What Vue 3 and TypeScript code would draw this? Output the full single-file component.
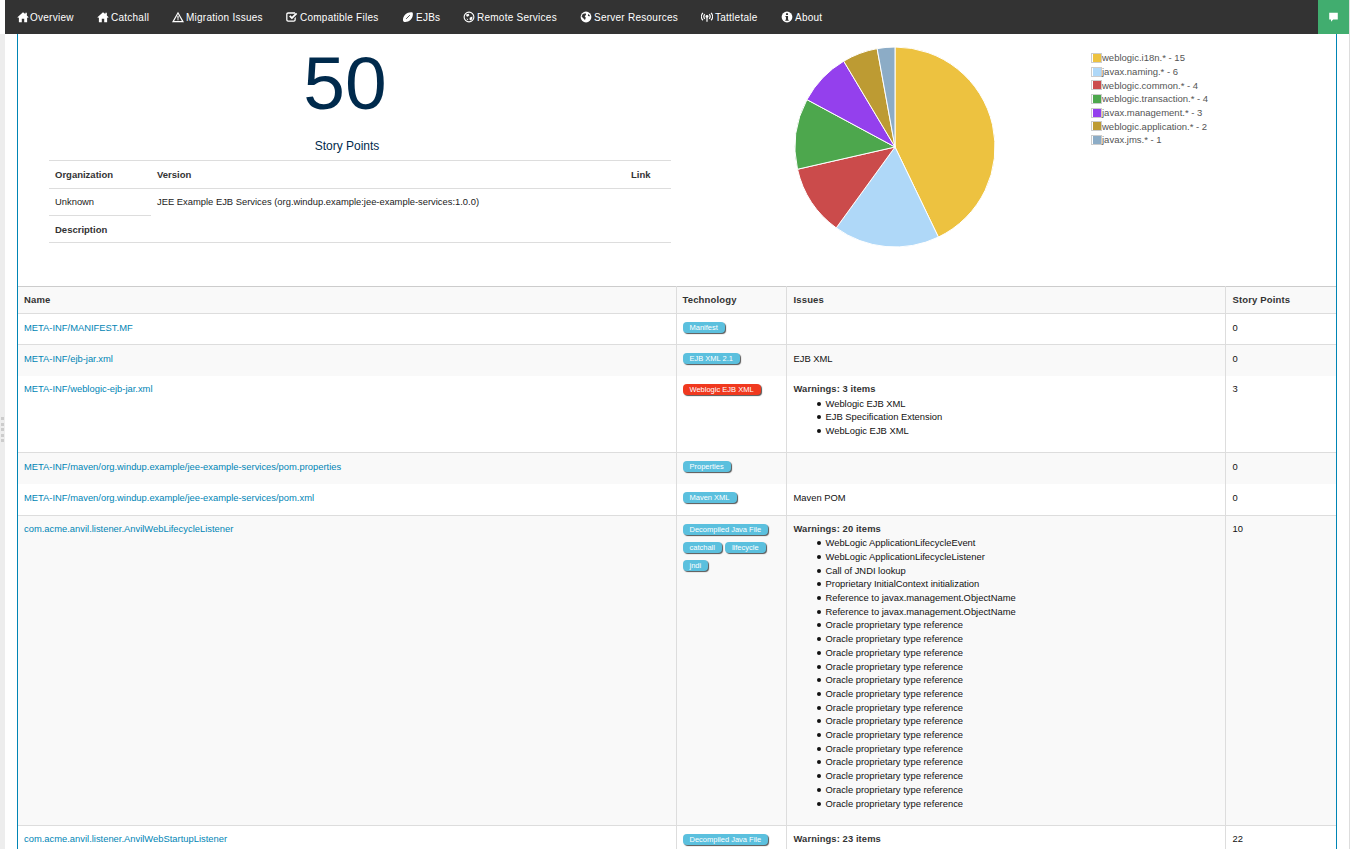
<script setup lang="ts">
interface Tag { text: string; red?: boolean }
interface Row { name: string; tags: Tag[]; plain?: string; title?: string; items?: string[]; points: number; h: number; line?: boolean; up?: boolean; wide?: boolean }

const oracle = Array.from({ length: 14 }, () => 'Oracle proprietary type reference')
const rows: Row[] = [
  { name: 'META-INF/MANIFEST.MF', tags: [{ text: 'Manifest' }], points: 0, h: 31 },
  { name: 'META-INF/ejb-jar.xml', tags: [{ text: 'EJB XML 2.1' }], plain: 'EJB XML', points: 0, h: 31, line: true },
  { name: 'META-INF/weblogic-ejb-jar.xml', tags: [{ text: 'Weblogic EJB XML', red: true }], title: 'Warnings: 3 items', items: ['Weblogic EJB XML', 'EJB Specification Extension', 'WebLogic EJB XML'], points: 3, h: 77, up: true, wide: true },
  { name: 'META-INF/maven/org.windup.example/jee-example-services/pom.properties', tags: [{ text: 'Properties' }], points: 0, h: 31, line: true },
  { name: 'META-INF/maven/org.windup.example/jee-example-services/pom.xml', tags: [{ text: 'Maven XML' }], plain: 'Maven POM', points: 0, h: 32 },
  {
    name: 'com.acme.anvil.listener.AnvilWebLifecycleListener',
    tags: [{ text: 'Decompiled Java File' }, { text: 'catchall' }, { text: 'lifecycle' }, { text: 'jndi' }],
    title: 'Warnings: 20 items',
    items: ['WebLogic ApplicationLifecycleEvent', 'WebLogic ApplicationLifecycleListener', 'Call of JNDI lookup', 'Proprietary InitialContext initialization', 'Reference to javax.management.ObjectName', 'Reference to javax.management.ObjectName', ...oracle],
    points: 10,
    h: 310,
    line: true,
    up: true,
  },
  { name: 'com.acme.anvil.listener.AnvilWebStartupListener', tags: [{ text: 'Decompiled Java File' }], title: 'Warnings: 23 items', points: 22, h: 40, line: true, up: true },
]

const navItems = [
  { label: 'Overview', icon: 'home', w: 80, tight: true },
  { label: 'Catchall', icon: 'home', w: 75 },
  { label: 'Migration Issues', icon: 'warn', w: 114 },
  { label: 'Compatible Files', icon: 'check', w: 116 },
  { label: 'EJBs', icon: 'ball', w: 61 },
  { label: 'Remote Services', icon: 'remote', w: 117 },
  { label: 'Server Resources', icon: 'globe', w: 121 },
  { label: 'Tattletale', icon: 'signal', w: 80 },
  { label: 'About', icon: 'info', w: 60 },
]

const slices = [
  { label: 'weblogic.i18n.*', value: 15, color: '#edc240' },
  { label: 'javax.naming.*', value: 6, color: '#afd8f8' },
  { label: 'weblogic.common.*', value: 4, color: '#cb4b4b' },
  { label: 'weblogic.transaction.*', value: 4, color: '#4da74d' },
  { label: 'javax.management.*', value: 3, color: '#9440ed' },
  { label: 'weblogic.application.*', value: 2, color: '#bd9b33' },
  { label: 'javax.jms.*', value: 1, color: '#8cacc6' },
]
const total = slices.reduce((s, x) => s + x.value, 0)
let acc = 0
const wedges = slices.map((s) => {
  const a0 = (acc / total) * 2 * Math.PI - Math.PI / 2
  acc += s.value
  const a1 = (acc / total) * 2 * Math.PI - Math.PI / 2
  const large = a1 - a0 > Math.PI ? 1 : 0
  const p = (a: number) => `${(100 * Math.cos(a)).toFixed(2)} ${(100 * Math.sin(a)).toFixed(2)}`
  return { color: s.color, d: `M0 0L${p(a0)}A100 100 0 ${large} 1 ${p(a1)}Z` }
})
</script>

<template>
  <div class="page">
    <nav class="nav">
      <a v-for="n in navItems" :key="n.label" class="nav-item" :class="{ tight: n.tight }" :style="{ width: n.w + 'px' }">
        <svg class="ico" viewBox="0 0 14 14">
          <path v-if="n.icon === 'home'" fill="#fff" d="M7 1.5L0.5 7.3l.8.9L2.2 7.4V13h3.4V9h2.800v4h3.400V7.400l.9.8.8-.9L11.500 5.200V2h-1.800v1.500z" />
          <template v-else-if="n.icon === 'warn'">
            <path fill="#fff" fill-rule="evenodd" d="M7 .8L0 13.200h14zM7 3.600L11.500 11.700H2.500z" />
            <path fill="#fff" d="M6.300 5.600h1.400v3.400H6.300zM6.300 9.500h1.400v1.400H6.300z" />
          </template>
          <template v-else-if="n.icon === 'check'">
            <path fill="#fff" d="M2.500 1.500h8v1.600h-8c-.4 0-.8.4-.8.8v6.400c0 .4.4.8.8.8h6.600c.4 0 .8-.4.8-.8V8.400l1.500-1.400v3.300c0 1.300-1 2.300-2.300 2.300H2.500C1.200 12.600.2 11.600.2 10.300V3.800C.2 2.500 1.200 1.500 2.500 1.500z" />
            <path fill="#fff" d="M3.600 6.300l1.500-1.400 1.800 1.800 4.700-4.700 1.500 1.400-6.200 6.200z" />
          </template>
          <template v-else-if="n.icon === 'ball'">
            <path fill="#fff" d="M1.800 12.200C.6 11 1 6.800 3.800 4 6.600 1.200 11 .9 12.200 1.800 13.200 3 12.900 7.400 10.100 10.200 7.300 13 3 13.300 1.800 12.200z" />
            <path stroke="#333" stroke-width="1" d="M4.800 9.200L9.200 4.800" />
          </template>
          <template v-else-if="n.icon === 'remote'">
            <circle cx="7" cy="7" r="5.700" fill="none" stroke="#fff" stroke-width="1.300" />
            <path fill="#fff" d="M3.500 4L6.500 3.200 7.500 5 5.500 6.800 4 6zM8 7.500L11 6.500 10.800 9.500 8.800 11 7.500 9.500zM4 8.500L6 9.500 5.500 11z" />
          </template>
          <template v-else-if="n.icon === 'globe'">
            <circle cx="7" cy="7" r="6.300" fill="#fff" />
            <path fill="#333" d="M3.200 3.500L6.500 2.500 7.200 4.500 5.500 6 6.800 8 5.800 10.500 3.800 8.500 1.800 6.500zM9.500 3.500L11.500 5 11 6.500 9.200 5.500z" />
          </template>
          <template v-else-if="n.icon === 'signal'">
            <circle cx="7" cy="6.500" r="1.700" fill="#fff" />
            <path fill="#fff" d="M6.300 7.500h1.400V12.500H6.300z" />
            <path fill="none" stroke="#fff" stroke-width="1.400" d="M4.400 3.800a3.800 3.800 0 0 0 0 5.400M9.600 3.800a3.800 3.800 0 0 1 0 5.400M2.200 2.200a6.400 6.400 0 0 0 0 8.600M11.800 2.200a6.400 6.400 0 0 1 0 8.600" />
          </template>
          <template v-else>
            <circle cx="7" cy="7" r="6.300" fill="#fff" />
            <path fill="#333" d="M5.800 2.600h2.400v2H5.800zM5.200 5.800h3v4.300h.8v1.300H5v-1.300h.8V7.100h-.6z" />
          </template>
        </svg>
        <span>{{ n.label }}</span>
      </a>
      <div class="feedback">
        <svg viewBox="0 0 14 14" width="11" height="10"><path fill="#fff" d="M1 1h12v9.500H6.500L3.500 13.500V10.500H1z" /></svg>
      </div>
    </nav>

    <div class="shell">
      <div class="gutter"><i></i><i></i><i></i><i></i><i></i></div>
      <div class="white-col">
        <main class="panel">
          <section class="summary">
            <div class="summary-left">
              <div class="big">50</div>
              <div class="big-label">Story Points</div>
              <table class="meta">
                <tbody>
                  <tr class="head">
                    <th class="m1">Organization</th>
                    <th>Version</th>
                    <th class="m3">Link</th>
                  </tr>
                  <tr>
                    <td class="m1 unk">Unknown</td>
                    <td colspan="2" rowspan="2" class="top">JEE Example EJB Services (org.windup.example:jee-example-services:1.0.0)</td>
                  </tr>
                  <tr>
                    <th class="m1">Description</th>
                  </tr>
                </tbody>
              </table>
            </div>
            <div class="pie-wrap">
              <svg class="pie" viewBox="-102 -102 204 204" width="204" height="204">
                <path v-for="(w, i) in wedges" :key="i" :d="w.d" :fill="w.color" stroke="#fff" stroke-width="1" />
              </svg>
            </div>
            <div class="legend">
              <div v-for="s in slices" :key="s.label" class="leg-row">
                <span class="swatch"><b :style="{ background: s.color }"></b></span>
                <span>{{ s.label }} - {{ s.value }}</span>
              </div>
            </div>
          </section>

          <table class="files">
            <thead>
              <tr>
                <th class="c1">Name</th>
                <th class="c2">Technology</th>
                <th class="c3">Issues</th>
                <th class="c4">Story Points</th>
              </tr>
            </thead>
            <tbody>
              <tr v-for="r in rows" :key="r.name" :class="{ line: r.line, up: r.up, wide: r.wide }" :style="{ height: r.h + 'px' }">
                <td><a class="link">{{ r.name }}</a></td>
                <td class="tags"><span v-for="t in r.tags" :key="t.text" class="tag" :class="{ red: t.red }">{{ t.text }}</span></td>
                <td>
                  <template v-if="r.plain">{{ r.plain }}</template>
                  <template v-if="r.title">
                    <strong>{{ r.title }}</strong>
                    <ul v-if="r.items"><li v-for="(it, i) in r.items" :key="i">{{ it }}</li></ul>
                  </template>
                </td>
                <td>{{ r.points }}</td>
              </tr>
            </tbody>
          </table>
        </main>
      </div>
    </div>
  </div>
</template>

<style>
html, body { margin: 0; height: 849px; overflow: hidden; background: #fff; }
</style>

<style scoped>
.page { width: 1350px; height: 849px; box-sizing: border-box; border-right: 1px solid #ddd; overflow: hidden; font-family: "Liberation Sans", Arial, sans-serif; font-size: 9.4px; color: #222; display: flex; flex-direction: column; }
.nav { height: 34px; margin-left: 5px; background: #333; display: flex; align-items: center; color: #fff; flex: none; position: relative; padding-left: 12px; }
.nav-item { display: flex; align-items: center; gap: 2px; height: 34px; font-size: 10px; letter-spacing: 0.25px; color: #fff; flex: none; }
.nav-item.tight { gap: 1px; }
.ico { width: 12px; height: 12px; flex: none; }
.feedback { position: absolute; right: 0; top: 0; width: 31px; height: 34px; background: #41ad6f; display: flex; align-items: center; justify-content: center; }
.shell { flex: 1; display: flex; min-height: 0; }
.gutter { width: 5px; background: #ededed; flex: none; display: flex; flex-direction: column; align-items: center; justify-content: center; gap: 2.500px; padding-bottom: 24px; box-sizing: border-box; }
.gutter i { width: 3px; height: 3px; background: #ccc; display: block; }
.white-col { flex: 1; padding-left: 12px; box-sizing: border-box; background: #fff; }
.panel { width: 1320px; box-sizing: border-box; border-left: 1px solid #0085b5; border-right: 1px solid #0085b5; height: 815px; overflow: hidden; }
.summary { height: 252px; display: flex; position: relative; }
.summary-left { width: 622px; margin-left: 31px; flex: none; color: #002a4c; }
.big { font-size: 75px; line-height: 92px; text-align: center; color: #002a4c; margin-top: 3px; padding-right: 30px; }
.big-label { font-size: 12px; line-height: 14px; text-align: center; margin-top: 10px; padding-right: 26px; }
.meta { width: 622px; border-collapse: collapse; margin-top: 7px; color: #222; table-layout: fixed; }
.meta th, .meta td { border-top: 1px solid #ddd; height: 27px; padding: 0 6px; text-align: left; font-size: 9.400px; box-sizing: border-box; }
.meta th { font-size: 9.500px; color: #333; }
.meta .head th { height: 28px; }
.meta .unk { padding-bottom: 2px; }
.meta tbody tr:last-child th { border-bottom: 1px solid #ddd; }
.meta td.top { vertical-align: top; padding-top: 7px; border-bottom: 1px solid #ddd; }
.meta .m1 { width: 102px; }
.meta .m3 { width: 46px; }
.pie-wrap { position: absolute; left: 775px; top: 11px; }
.pie { display: block; }
.legend { position: absolute; left: 1073px; top: 17px; color: #545454; font-size: 9.500px; }
.leg-row { display: flex; align-items: center; height: 13.700px; }
.swatch { width: 8px; height: 8px; border: 1px solid #ccc; padding: 0 0 0 1px; display: block; flex: none; margin-right: 0; }
.swatch b { display: block; width: 8px; height: 8px; }
.files { width: 1318px; border-collapse: collapse; table-layout: fixed; color: #111; margin-top: 0; }
.files th { background: #f9f9f9; height: 27px; text-align: left; padding: 0 6px 2px; border-top: 1px solid #ccc; border-bottom: 1px solid #ddd; border-right: 1px solid #ddd; font-size: 9.500px; letter-spacing: 0.15px; color: #333; box-sizing: border-box; }
.files th:last-child { border-right: 0; }
.files td { vertical-align: top; padding: 7px 6px 0; border-right: 1px solid #ddd; line-height: 13.700px; box-sizing: border-box; }
.files td:last-child { border-right: 0; }
.files th:nth-child(n+3), .files td:nth-child(n+3) { padding-left: 7px; }
.files tbody tr.up td { padding-top: 6px; }
.files tbody tr.up td.tags { padding-top: 7px; }
.files tbody tr.wide ul { margin-top: 1.500px; }
.files tbody tr:nth-child(even) td { background: #f9f9f9; }
.files tbody tr.line td { border-top: 1px solid #ddd; }
.c1 { width: 658px; }
.c2 { width: 110px; }
.c3 { width: 439px; }
.link { color: #0085b5; }
.tags { font-size: 0; }
.tag { display: inline-block; background: #5bc0de; color: #fff; font-size: 7.500px; line-height: 11px; height: 11px; padding: 0 7px; border-radius: 4px; box-shadow: 1px 1px 1px #555; margin: 1px 3px 6px 0; vertical-align: top; }
.tag.red { background: #f0391f; }
strong { font-weight: bold; color: #333; letter-spacing: 0.1px; }
ul { margin: 0.500px 0 0; padding: 0 0 0 32px; list-style: none; }
li { position: relative; }
li::before { content: ""; position: absolute; left: -9px; top: 5px; width: 4px; height: 4px; border-radius: 50%; background: #111; }
</style>
